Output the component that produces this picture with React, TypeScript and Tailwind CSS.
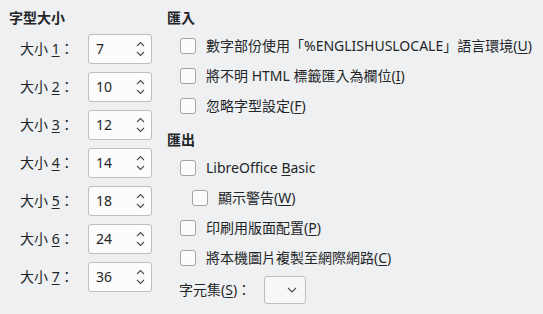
import React from "react";

const U = ({ children }: { children: React.ReactNode }) => (
  <span className="underline underline-offset-[2px] decoration-[1px]">{children}</span>
);

const Spin = ({ value }: { value: string }) => (
  <div className="w-[64px] h-[30px] rounded-[3px] border border-[#bcbec0] bg-[#fcfcfc] flex items-center justify-between pl-[7px] pr-[6px]">
    <span>{value}</span>
    <svg width="9" height="16" viewBox="0 0 9 16" fill="none" stroke="#4a4d50" strokeWidth="1.1">
      <path d="M1 5 L4.5 1.5 L8 5" />
      <path d="M1 11 L4.5 14.5 L8 11" />
    </svg>
  </div>
);

const Check = ({ children, indent = false }: { children: React.ReactNode; indent?: boolean }) => (
  <div className={`h-[30px] flex items-center ${indent ? "pl-[25px]" : "pl-[13px]"}`}>
    <div className="w-[16px] h-[16px] rounded-[3px] border border-[#a2a4a7] bg-[#fcfcfc] shrink-0" />
    <span className="ml-[10px] whitespace-nowrap">{children}</span>
  </div>
);

export default function App() {
  const sizes = ["7", "10", "12", "14", "18", "24", "36"];
  return (
    <div
      className="w-[543px] h-[314px] bg-[#eff0f1] text-[#232629] text-[14px] leading-none flex overflow-hidden"
      style={{ fontFamily: '"Noto Sans", "Noto Sans CJK TC", sans-serif' }}
    >
      <div className="pl-[9px] pt-[5px] w-[167px] shrink-0 flex flex-col">
        <div className="h-[26px] flex items-center font-bold">字型大小</div>
        <div className="mt-[3px] flex flex-col gap-[8px]">
          {sizes.map((v, i) => (
            <div key={i} className="h-[30px] flex items-center pl-[11px]">
              <span className="w-[68px] whitespace-nowrap">
                大小 <U>{i + 1}</U>：
              </span>
              <Spin value={v} />
            </div>
          ))}
        </div>
      </div>
      <div className="pt-[5px] flex flex-col">
        <div className="h-[26px] flex items-center font-bold">匯入</div>
        <Check>
          數字部份使用「%ENGLISHUSLOCALE」語言環境(<U>U</U>)
        </Check>
        <Check>
          將不明 HTML 標籤匯入為欄位(<U>I</U>)
        </Check>
        <Check>
          忽略字型設定(<U>F</U>)
        </Check>
        <div className="mt-[6px] h-[26px] flex items-center font-bold">匯出</div>
        <Check>
          LibreOffice <U>B</U>asic
        </Check>
        <Check indent>
          顯示警告(<U>W</U>)
        </Check>
        <Check>
          印刷用版面配置(<U>P</U>)
        </Check>
        <Check>
          將本機圖片複製至網際網路(<U>C</U>)
        </Check>
        <div className="h-[34px] flex items-center pl-[12px]">
          <span className="w-[85px] whitespace-nowrap">
            字元集(<U>S</U>)：
          </span>
          <div className="w-[42px] h-[28px] rounded-[3px] border border-[#bcbec0] bg-[#f7f7f7] flex items-center justify-end pr-[8px]">
            <svg width="10" height="6" viewBox="0 0 10 6" fill="none" stroke="#4a4d50" strokeWidth="1.1">
              <path d="M1 1 L5 5 L9 1" />
            </svg>
          </div>
        </div>
      </div>
    </div>
  );
}
